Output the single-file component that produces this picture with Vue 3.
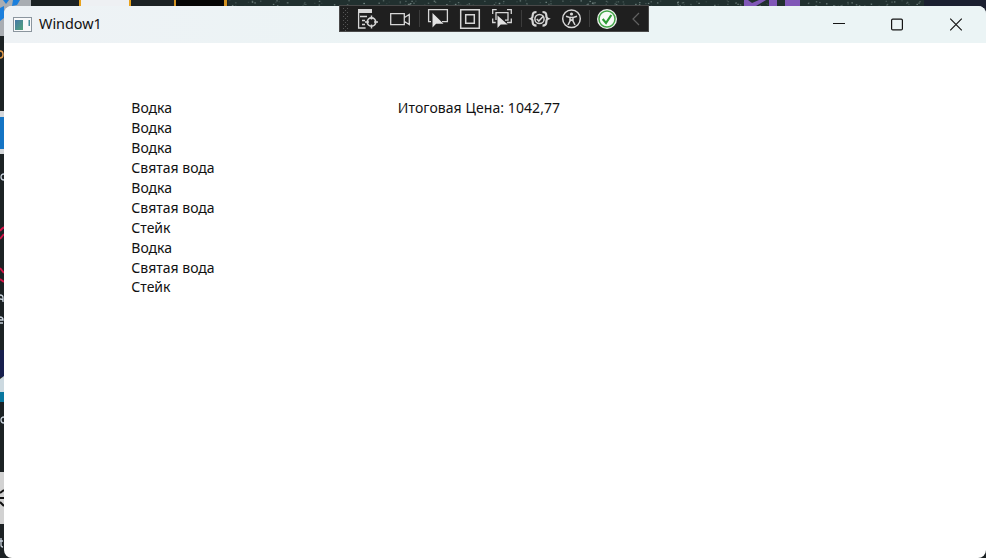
<script setup>
const items = [
  'Водка', 'Водка', 'Водка', 'Святая вода', 'Водка',
  'Святая вода', 'Стейк', 'Водка', 'Святая вода', 'Стейк',
]
const stars = Array.from({ length: 190 }, (_, i) => ({
  x: 229 + ((i * 173.77 + (i * i * 7.3)) % 694),
  y: (i * 2.63 + i * i * 0.37) % 6,
  o: 0.1 + ((i * 37) % 50) / 100,
}))
</script>

<template>
  <div class="desktop">
    <svg class="wallpaper" width="986" height="558" viewBox="0 0 986 558">
      <rect width="986" height="558" fill="#1c2224" />
      <rect width="31" height="36" fill="#a9adb2" />
      <path d="M0 8l4-2v12l-4 3zM3 0h6l-3 4zM13 0h7l-3 5-5 1z" fill="#1b7fdc" />
      <rect x="79" width="52" height="7" fill="#e8a21c" />
      <rect x="81" width="48" height="7" fill="#eef0f3" />
      <rect x="174" width="53" height="7" fill="#d39220" />
      <rect x="176" width="48" height="7" fill="#050505" />
      <rect x="228" width="696" height="7" fill="#21302f" />
      <rect v-for="(s, i) in stars" :key="i" :x="s.x" :y="s.y" width="1.5" height="1.2" fill="#a9bcb8" :opacity="s.o" />
      <path d="M744 0h4l4 3 7-3h7l-10 6h-12zM769 0h8v6h-8zM785 0h15v6h-15z" fill="#8057b7" />
      <rect x="924" width="62" height="14" fill="#1b2030" />
      <rect y="111" width="4" height="43" fill="#d4d7da" />
      <rect y="117" width="4" height="32" fill="#1474c4" />
      <path d="M0 231q2-3 5-4M0 239l4-5M0 268l4 5M0 279l4 3" stroke="#d51548" stroke-width="2" fill="none" />
      <rect y="350" width="4" height="27" fill="#17204e" />
      <path d="M0 379l4-3v16H0z" fill="#ccd9e0" />
      <rect y="392" width="4" height="10" fill="#08779f" />
      <rect y="472" width="4" height="52" fill="#d2d2d2" />
      <path d="M0 493l4-3M0 498h4M0 502l4 4" stroke="#111" stroke-width="2" />
      <path d="M0 51q3 0 3 3.500T0 58" stroke="#e39b4b" stroke-width="1.5" fill="none" />
      <path d="M4 174q-3 0-3 3t3 3M0 295q3 0 3 3v4M0 299q3 0 3 2M0 320h3q0-3-3-3M0 323h3M4 417q-3 0-3 3t3 3M1 538v7q0 2 2 2M0 541h3" stroke="#c8d2dc" stroke-width="1.3" fill="none" />
    </svg>

    <main class="window">
      <header class="titlebar">
        <svg class="app-icon" width="19" height="16" viewBox="0 0 19 16">
          <rect x=".5" y=".5" width="18" height="14" fill="#f8f9fa" stroke="#8b959e" />
          <defs>
            <linearGradient id="pane" x1="0" y1="0" x2="1" y2="1">
              <stop stop-color="#4778a8" /><stop offset="1" stop-color="#50a47a" />
            </linearGradient>
          </defs>
          <rect x="2" y="3" width="8" height="10" fill="url(#pane)" />
          <rect x="15.5" y="3" width="1.5" height="6" fill="#4b909c" />
        </svg>
        <span class="title">Window1</span>
        <div class="controls">
          <svg width="14" height="14" viewBox="0 0 14 14"><path d="M2 5.500h12" /></svg>
          <svg width="14" height="14" viewBox="0 0 14 14"><rect x="1.600" y="1.100" width="10.800" height="10.800" rx="1.200" /></svg>
          <svg width="14" height="14" viewBox="0 0 14 14"><path d="M1.200 .7l11.600 11.600M12.800 .7L1.200 12.300" /></svg>
        </div>
      </header>
      <section class="content">
        <ul class="items">
          <li v-for="(item, i) in items" :key="i">{{ item }}</li>
        </ul>
        <p class="total">Итоговая Цена: 1042,77</p>
      </section>
    </main>

    <svg class="debug-bar" width="310" height="27" viewBox="0 0 310 27">
      <rect x=".5" y=".5" width="309" height="26" fill="#1f1f1f" stroke="#494949" />
      <g fill="#565656">
        <template v-for="r in 6" :key="r">
          <rect x="4" :y="r * 4 - 1" width="1" height="1" />
          <rect x="8" :y="r * 4 - 1" width="1" height="1" />
          <rect x="6" :y="r * 4 + 1" width="1" height="1" />
        </template>
      </g>
      <path d="M80.500 5v17M182.500 5v17M250.500 5v17" stroke="#3c3c3c" />
      <g fill="none" stroke="#d6d6d6" stroke-width="1.3">
        <path d="M19 4h14v4H19z" fill="#d6d6d6" stroke="none" />
        <path d="M19.600 7v16h7M21 11.500h7M23 15.500h3M23 19.500h3" />
        <circle cx="32.500" cy="17" r="4.200" stroke-width="1.700" />
        <path d="M32.500 10.500v4M32.500 19.500v4M26 17h4M35 17h4" stroke-width="1.500" />
        <path d="M51.700 8.700h13.600v11H51.700zM65.500 12.500l4.800-3v10l-4.800-3" />
        <path d="M92 16.700h-2.400V4.700h18.800v12H103" />
        <path d="M93.500 8v14.500l3.600-3.700h7.400z" fill="#e2e2e2" stroke="none" />
        <path d="M121.700 4.700h18.600v18.600h-18.600zM126.700 9.700h8.600v8.600h-8.600z" stroke-width="1.500" />
        <path d="M153.700 9V4.700h4M168 4.700h4.300V9M153.700 13.500v4h3M172.300 13.500v4H168M157 15V7.700h12v7.500h-3" />
        <path d="M158.500 10.500v12.500l3.200-3.500h7z" fill="#e2e2e2" stroke="none" />
        <path d="M197.500 7c-3 0-3.800 1-3.800 3.300 0 2-.4 3-1.600 3.500 1.200.5 1.600 1.500 1.600 3.500 0 2.300.8 3.300 3.800 3.300M203.500 7c3 0 3.800 1 3.800 3.300 0 2 .4 3 1.600 3.500-1.200.5-1.600 1.500-1.600 3.500 0 2.300-.8 3.300-3.800 3.300" stroke-width="2.200" />
        <circle cx="200.500" cy="14" r="5.600" fill="#1f1f1f" stroke="none" />
        <circle cx="200.500" cy="14" r="4.600" stroke-width="1.500" />
        <path d="M197.800 14l2 2 4.700-5" stroke-width="1.600" />
        <circle cx="232.500" cy="13.700" r="8.800" stroke-width="1.500" />
        <circle cx="232.500" cy="9" r="1.600" fill="#d6d6d6" stroke="none" />
        <path d="M227 11.200l4 1.300v3.500L229 20M238 11.200l-4 1.300v3.500l2 4M231 12.500h3M231 16l1.500-1 1.500 1" stroke-width="1.500" />
      </g>
      <circle cx="268" cy="14" r="10" fill="#eff3ef" />
      <circle cx="268" cy="14" r="8" fill="#f7faf7" stroke="#43a447" stroke-width="1.500" />
      <path d="M263.700 14l3.300 4 5.300-8" fill="none" stroke="#2d9b35" stroke-width="2.200" />
      <path d="M300 8l-6 6 6 6" fill="none" stroke="#626262" stroke-width="1.200" />
    </svg>
  </div>
</template>

<style>
body { margin: 0; overflow: hidden; }
</style>

<style scoped>
.desktop {
  position: relative;
  box-sizing: border-box;
  width: 986px;
  height: 558px;
  padding: 6px 0 0 4px;
  overflow: hidden;
  font-family: "Noto Sans", "Open Sans", sans-serif;
}
.wallpaper { position: absolute; top: 0; left: 0; }
.window {
  position: relative;
  height: 552px;
  border-radius: 8px;
  overflow: hidden;
  background: #fff;
  color: #111;
}
.titlebar {
  box-sizing: border-box;
  display: flex;
  align-items: center;
  height: 37px;
  padding: 0 23px 0 9px;
  background: linear-gradient(90deg, #eef2f5, #ebf4f5 45%);
}
.app-icon { flex: none; }
.title {
  margin-left: 7px;
  padding-bottom: 1px;
  font-size: 14.4px;
  line-height: 20px;
}
.controls {
  display: flex;
  gap: 45px;
  margin-left: auto;
  fill: none;
  stroke: #151515;
  stroke-width: 1.2;
}
.content {
  display: grid;
  grid-template-columns: 266.5px 1fr;
  padding: 55px 0 0 127.3px;
  font-size: 14px;
  line-height: 19.93px;
}
.items { margin: 0; padding: 0; list-style: none; }
.total { margin: 0; letter-spacing: 0.08px; white-space: nowrap; }
.debug-bar { position: absolute; top: 5px; left: 339px; }
</style>
